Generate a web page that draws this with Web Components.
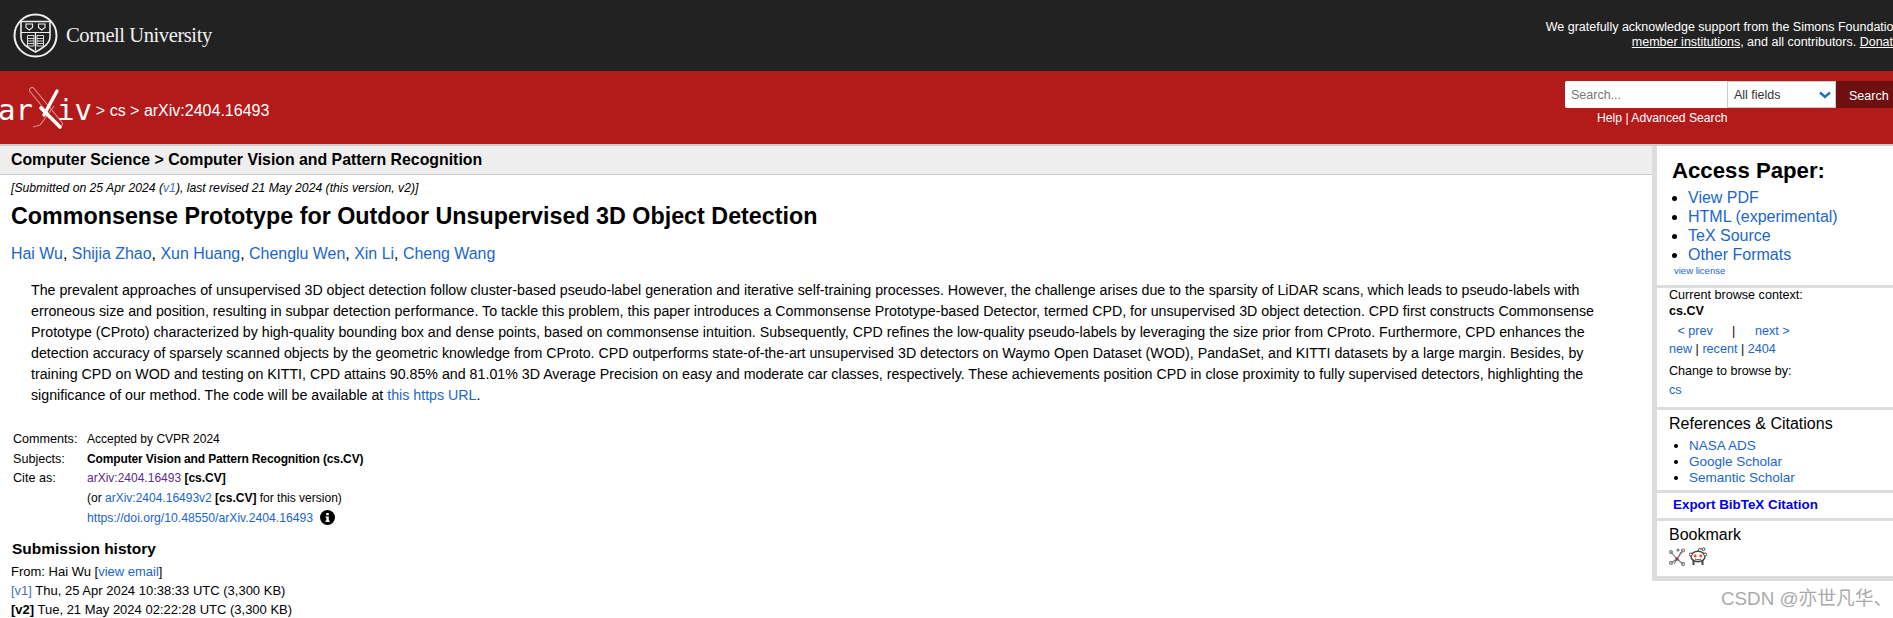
<!DOCTYPE html>
<html>
<head>
<meta charset="utf-8">
<title>arXiv 2404.16493</title>
<style>
html, body { margin: 0; padding: 0; overflow: hidden; height: 618px; background: #fff; }
body { font-family: "Liberation Sans", Arial, sans-serif; color: #000; position: relative; }
a { color: #1a66cc; text-decoration: none; }
arxiv-bar a { color: #fff; }
</style>
</head>
<body>

<cu-banner></cu-banner>
<arxiv-bar>
  <a href="#">cs</a> <span>&gt;</span> <a href="#">arXiv:2404.16493</a>
</arxiv-bar>
<paper-page></paper-page>
<csdn-mark>CSDN @亦世凡华、</csdn-mark>

<script>
class CuBanner extends HTMLElement {
    constructor() {
        super();
        this.attachShadow({mode:'open'});
        this.shadowRoot.innerHTML = `
        <style>
        :host { display:block; background:#222; height:71px; width:1905px; color:#fff; }
        .row { display:flex; justify-content:space-between; height:100%; }
        .logo { display:flex; align-items:center; padding-left:13px; gap:8px; }
        .name { font:20.6px/1 "Liberation Serif", serif; color:#f0f0f0; letter-spacing:-.45px; }
        .thanks { font:12.5px/15px "Liberation Sans", sans-serif; text-align:right; padding:20px 1px 0 0; white-space:nowrap; }
        .thanks div + div { padding-right:4px; }
        a { color:#fff; text-decoration:underline; }
        </style>
        <div class="row">
          <div class="logo">
            <svg width="45" height="45" viewBox="0 0 45 45" fill="none" stroke="#eee">
              <circle cx="22.5" cy="22.500" r="21" stroke-width="2"/>
              <path d="M8 8.500h29v15c0 7.500-7 11-14.500 15.500c-7.500-4.500-14.500-8-14.500-15.500z" stroke-width="1.600"/>
              <path d="M8 19.500h29M22.500 19.500v18" stroke-width="1.200"/>
              <path d="M13 11h6.500v3.500l-3.250 2.500l-3.250-2.500zM25.500 11h6.500v3.500l-3.250 2.500l-3.250-2.500z" stroke-width="1.100"/>
              <path d="M14.500 22.500h6.500v10.500h-6.500zM24 22.500h6.500v10.500h-6.500zM14.500 25.500h6.500M14.500 28h6.500M14.500 30.500h6.500M24 25.500h6.500M24 28h6.500M24 30.500h6.500" stroke-width=".9"/>
            </svg>
            <span class="name">Cornell University</span>
          </div>
          <div class="thanks"><div>We gratefully acknowledge support from the Simons Foundation,</div><div><a href="#">member institutions</a>, and all contributors. <a href="#">Donate</a></div></div>
        </div>`;
    }
}
customElements.define('cu-banner',CuBanner);

class SearchForm extends HTMLElement {
    constructor() {
        super();
        this.attachShadow({mode:'open'});
        this.shadowRoot.innerHTML = `
        <style>
        :host { display:block; width:341px; padding-top:10px; font-family:"Liberation Sans", sans-serif; }
        .fields { display:flex; height:27px; }
        .input { width:156px; background:#fff; color:#777; font-size:12.5px; line-height:28px; padding-left:6px; border-radius:2px 0 0 2px; }
        .select { width:109px; box-sizing:border-box; background:#fff; border:1px solid #ccc; color:#333; font-size:12.5px; line-height:26px; padding-left:6px; position:relative; }
        .select svg { position:absolute; right:4px; top:9px; }
        .btn { width:70px; background:#6f1010; color:#fff; font-size:12.5px; line-height:31px; padding-left:13px; box-sizing:border-box; }
        .help { font-size:12.2px; line-height:16px; color:#fff; padding:2px 0 0 32px; }
        </style>
        <div class="fields">
          <div class="input">Search...</div>
          <div class="select">All fields
            <svg width="12" height="8" viewBox="0 0 12 8"><path d="M1 1.500l5 4.500l5-4.500" fill="none" stroke="#1772b8" stroke-width="2.400"/></svg>
          </div>
          <div class="btn">Search</div>
        </div>
        <div class="help">Help | Advanced Search</div>`;
    }
}
customElements.define('search-form',SearchForm);

class ArxivBar extends HTMLElement {
    constructor() {
        super();
        this.attachShadow({mode:'open'});
        this.shadowRoot.innerHTML = `
        <style>
        :host { display:block; background:#b31b1b; height:73px; width:1893px; border-bottom:2px solid #ccc; color:#fff; overflow:hidden; }
        .row { display:flex; justify-content:space-between; height:100%; }
        .left { display:flex; align-items:center; font-size:16px; }
        .logo { display:flex; align-items:center; font:29px/1 "DejaVu Sans Mono", monospace; margin:0 0 0 -2px; }
        .logo span { padding-top:5px; }
        .logo svg { margin:0 -8px 0 -4px; }
        .crumbs { margin-left:4px; padding-top:7px; }
        .right { margin-right:-13px; }
        </style>
        <div class="row">
          <div class="left">
            <div class="logo"><span>ar</span>
              <svg width="36" height="44" viewBox="0 0 36 44">
                <path d="M3 4l28 34" stroke="#d98a8a" stroke-width="6" stroke-linecap="round" fill="none"/>
                <path d="M3 4l28 34" stroke="#b31b1b" stroke-width="4" stroke-linecap="round" fill="none"/>
                <path d="M4 41l7-2l14-19" stroke="#d98a8a" stroke-width="1.200" fill="none"/>
                <path d="M12 22L31 41" stroke="#fff" stroke-width="3.600" stroke-linecap="round"/>
                <path d="M15 29L28 5" stroke="#fff" stroke-width="3.400" stroke-linecap="round"/>
              </svg><span>iv</span></div>
            <div class="crumbs">&gt; <slot></slot></div>
          </div>
          <div class="right"><search-form></search-form></div>
        </div>`;
    }
}
customElements.define('arxiv-bar',ArxivBar);

class SideBox extends HTMLElement {
    constructor() {
        super();
        this.attachShadow({mode:'open'});
        this.shadowRoot.innerHTML = `
        <style>
        :host { display:block; border-bottom:3px solid #ddd; padding-left:12px; font-size:12.6px; line-height:16px; }
        :host(:last-child) { border-bottom-width:5px; }
        </style>
        <slot></slot>`;
    }
}
customElements.define('side-box',SideBox);

class AccessPanel extends HTMLElement {
    constructor() {
        super();
        this.attachShadow({mode:'open'});
        this.shadowRoot.innerHTML = `
        <style>
        :host { display:block; width:236px; border-left:5px solid #ddd; flex:none; align-self:flex-start; }
        a { color:#1a66cc; text-decoration:none; }
        h2 { font-size:22.2px; line-height:26px; margin:0; padding:12px 0 0 15px; }
        .big { margin:4px 0 0; padding:0 0 0 31px; font-size:16px; line-height:19px; }
        .license { font-size:9.500px; line-height:13px; display:block; padding-left:17px; }
        .box { overflow:hidden; }
        .ctx { margin-top:-1px; }
        .nav { padding:3px 0 0 5px; height:18px; line-height:18px; display:flex; }
        .nav a:first-child { width:58px; }
        .nav span { width:23px; }
        .line { line-height:18px; height:18px; }
        .chg { padding-top:4px; height:18px; line-height:18px; }
        h3 { font-weight:normal; font-size:16px; line-height:20px; margin:0; padding-top:4px; }
        .small { margin:4px 0 0; padding:0 0 0 20px; line-height:16.200px; font-size:13.500px; }
        .export { font-size:13.400px; font-weight:bold; color:#0000ee; line-height:20px; height:25px; display:block; padding-left:4px; }
        .icons { display:flex; gap:4px; padding-top:3px; align-items:flex-start; }
        </style>
        <side-box>
          <div style="height:139px;margin-left:-12px">
            <h2>Access Paper:</h2>
            <ul class="big">
              <li><a href="#">View PDF</a></li>
              <li><a href="#">HTML (experimental)</a></li>
              <li><a href="#">TeX Source</a></li>
              <li><a href="#">Other Formats</a></li>
            </ul>
            <a class="license" href="#">view license</a>
          </div>
        </side-box>
        <side-box>
          <div style="height:119px" class="box">
            <div class="ctx">Current browse context:</div>
            <div><b>cs.CV</b></div>
            <div class="nav"><a href="#">&nbsp;&lt; prev</a><span>|</span><a href="#">next &gt;</a></div>
            <div class="line"><a href="#">new</a> | <a href="#">recent</a> | <a href="#">2404</a></div>
            <div class="chg">Change to browse by:</div>
            <div class="line" style="padding-top:1px"><a href="#">cs</a></div>
          </div>
        </side-box>
        <side-box>
          <div style="height:80px">
            <h3>References &amp; Citations</h3>
            <ul class="small">
              <li><a href="#">NASA ADS</a></li>
              <li><a href="#">Google Scholar</a></li>
              <li><a href="#">Semantic Scholar</a></li>
            </ul>
          </div>
        </side-box>
        <side-box><a class="export" href="#" style="padding-top:2px;height:23px">Export BibTeX Citation</a></side-box>
        <side-box>
          <div style="height:55px">
            <h3>Bookmark</h3>
            <div class="icons">
              <svg width="16" height="18" viewBox="0 0 16 18" fill="none" stroke="#777" stroke-width="1.100">
                <path d="M2 4l6 7l6 5M14 2.500L8 11L2 15M8 11l-3 5M8 11l4-7"/>
                <circle cx="2" cy="4" r="1.400"/><circle cx="14" cy="2.500" r="1.500"/><circle cx="9" cy="2" r="1"/><circle cx="2" cy="15" r="1.500"/><circle cx="14" cy="16" r="1.500"/>
                <circle cx="8" cy="11" r="1.700" fill="#a03060" stroke="none"/>
              </svg>
              <svg width="18" height="19" viewBox="0 0 18 19" style="margin-top:-1px">
                <path d="M4.500 13v5M13.500 13v5" stroke="#444" stroke-width="2"/>
                <ellipse cx="9" cy="9.500" rx="7" ry="5.200" fill="#fff" stroke="#444" stroke-width="1.400"/>
                <circle cx="1.800" cy="7.500" r="1.500" fill="#fff" stroke="#444"/><circle cx="16.200" cy="7.500" r="1.500" fill="#fff" stroke="#444"/>
                <circle cx="6.200" cy="9" r="1.400" fill="#f40"/><circle cx="11.800" cy="9" r="1.400" fill="#f40"/>
                <path d="M9 4.300L10 1.500L13.500 2.200" fill="none" stroke="#444"/><circle cx="14.500" cy="2.200" r="1.400" fill="#fff" stroke="#444"/>
                <path d="M6 12c2 1.100 4 1.100 6 0" fill="none" stroke="#444"/>
              </svg>
            </div>
          </div>
        </side-box>`;
    }
}
customElements.define('access-panel',AccessPanel);

class MetaTable extends HTMLElement {
    constructor() {
        super();
        this.attachShadow({mode:'open'});
        this.shadowRoot.innerHTML = `
        <style>
        :host { display:grid; grid-template-columns:74px 1fr; font-size:12px; line-height:19.700px; padding-left:13px; margin-top:24px; }
        a { color:#1a66cc; text-decoration:none; }
        a.seen { color:#5b2a92; }
        a.doi { font-size:12.200px; }
        b.tight { letter-spacing:-.13px; }
        .k { font-size:12.600px; }
        svg { vertical-align:-3px; margin-left:4px; }
        </style>
        <div class="k">Comments:</div><div>Accepted by CVPR 2024</div>
        <div class="k">Subjects:</div><div><b class="tight">Computer Vision and Pattern Recognition (cs.CV)</b></div>
        <div class="k">Cite as:</div><div><a class="seen" href="#">arXiv:2404.16493</a> <b>[cs.CV]</b></div>
        <div></div><div>(or <a href="#">arXiv:2404.16493v2</a> <b>[cs.CV]</b> for this version)</div>
        <div></div><div><a class="doi" href="#">https://doi.org/10.48550/arXiv.2404.16493</a>
          <svg width="15" height="15" viewBox="0 0 15 15"><circle cx="7.500" cy="7.500" r="7.500" fill="#000"/><path d="M6.200 3h2.600v2.200H6.200zM5.600 6.400h3.200v4.200h.8v1.400H5.600v-1.400h.8V7.800H5.600z" fill="#fff"/></svg></div>`;
    }
}
customElements.define('meta-table',MetaTable);

class PaperPage extends HTMLElement {
    constructor() {
        super();
        this.attachShadow({mode:'open'});
        this.shadowRoot.innerHTML = `
        <style>
        :host { display:flex; width:1893px; }
        a { color:#1a66cc; text-decoration:none; }
        main { flex:1; min-width:0; }
        .subj { background:#eee; border-bottom:1px solid #ccc; font-size:15.850px; font-weight:bold; line-height:27px; padding-left:11px; height:28px; }
        .dates { font-size:12.200px; font-style:italic; line-height:16px; padding:5px 0 0 11px; }
        .dates a { color:#4d6fb8; }
        h1 { font-size:23.300px; line-height:28px; margin:0; padding:6px 0 0 11px; }
        .authors { font-size:15.950px; line-height:20px; padding:14px 0 0 11px; }
        .abs { font-size:14.220px; line-height:21px; padding:16px 44px 0 31px; }
        h2 { font-size:15.500px; line-height:20px; margin:0; padding:10px 0 0 12px; }
        .hist { font-size:13px; line-height:19px; padding:3px 0 0 11px; }
        .hist .v { color:#4d6fb8; }
        </style>
        <main>
          <div class="subj">Computer Science &gt; Computer Vision and Pattern Recognition</div>
          <div class="dates">[Submitted on 25 Apr 2024 (<a href="#">v1</a>), last revised 21 May 2024 (this version, v2)]</div>
          <h1>Commonsense Prototype for Outdoor Unsupervised 3D Object Detection</h1>
          <div class="authors"><a href="#">Hai Wu</a>, <a href="#">Shijia Zhao</a>, <a href="#">Xun Huang</a>, <a href="#">Chenglu Wen</a>, <a href="#">Xin Li</a>, <a href="#">Cheng Wang</a></div>
          <div class="abs">The prevalent approaches of unsupervised 3D object detection follow cluster-based pseudo-label generation and iterative self-training processes. However, the challenge arises due to the sparsity of LiDAR scans, which leads to pseudo-labels with erroneous size and position, resulting in subpar detection performance. To tackle this problem, this paper introduces a Commonsense Prototype-based Detector, termed CPD, for unsupervised 3D object detection. CPD first constructs Commonsense Prototype (CProto) characterized by high-quality bounding box and dense points, based on commonsense intuition. Subsequently, CPD refines the low-quality pseudo-labels by leveraging the size prior from CProto. Furthermore, CPD enhances the detection accuracy of sparsely scanned objects by the geometric knowledge from CProto. CPD outperforms state-of-the-art unsupervised 3D detectors on Waymo Open Dataset (WOD), PandaSet, and KITTI datasets by a large margin. Besides, by training CPD on WOD and testing on KITTI, CPD attains 90.85% and 81.01% 3D Average Precision on easy and moderate car classes, respectively. These achievements position CPD in close proximity to fully supervised detectors, highlighting the significance of our method. The code will be available at <a href="#">this https URL</a>.</div>
          <meta-table></meta-table>
          <h2>Submission history</h2>
          <div class="hist">From: Hai Wu [<a href="#">view email</a>]<br>
          <a class="v" href="#">[v1]</a> Thu, 25 Apr 2024 10:38:33 UTC (3,300 KB)<br>
          <b>[v2]</b> Tue, 21 May 2024 02:22:28 UTC (3,300 KB)</div>
        </main>
        <access-panel></access-panel>`;
    }
}
customElements.define('paper-page',PaperPage);

class CsdnMark extends HTMLElement {
    constructor() {
        super();
        this.attachShadow({mode:'open'});
        this.shadowRoot.innerHTML = `
        <style>
        :host { position:absolute; left:1721px; top:588px; font:18.800px/22px "Liberation Sans", "Noto Sans CJK SC", sans-serif; color:#aaa; white-space:nowrap; text-shadow:0 0 1px #fff; }
        </style>
        <slot></slot>`;
    }
}
customElements.define('csdn-mark',CsdnMark);
</script>
</body>
</html>
